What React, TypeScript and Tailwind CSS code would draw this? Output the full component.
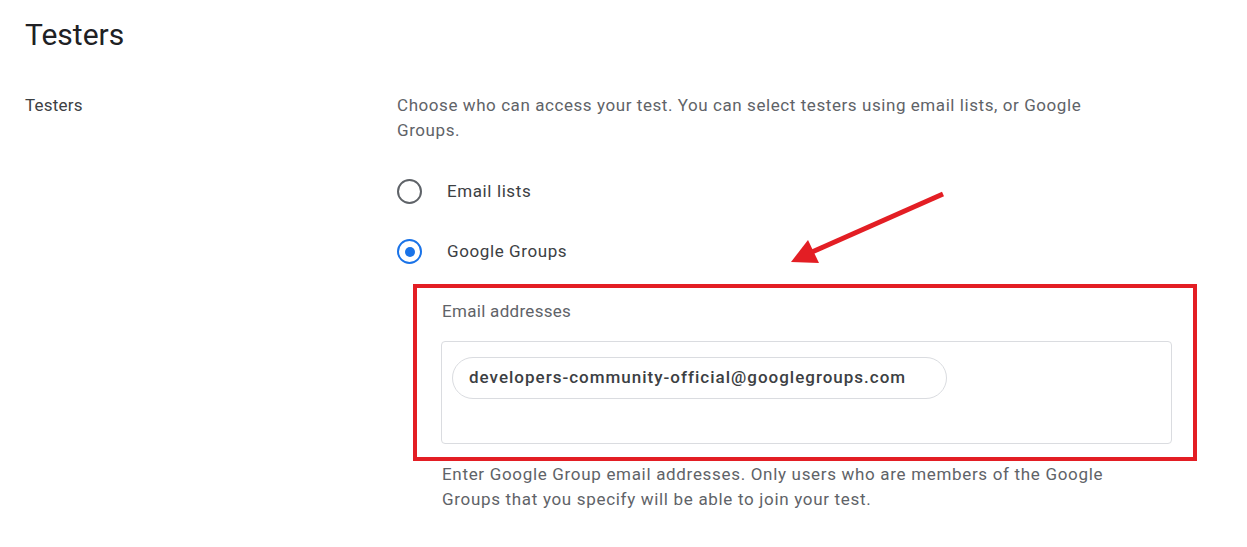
export default function App() {
  return (
    <div className="relative min-h-screen bg-white pl-[25px] pt-[17px] font-['Roboto',sans-serif] text-[#3c4043]">
      <h1 className="text-[30px] leading-[36px] font-normal text-[#202124]">Testers</h1>

      <div className="mt-[40px] flex">
        <div className="w-[372px] text-[17px] leading-[25px] tracking-[0.2px] text-[#3c4043]">Testers</div>

        <div className="flex-1">
          <p className="w-[710px] text-[17px] leading-[25px] tracking-[0.57px] text-[#5f6368]">
            Choose who can access your test. You can select testers using email lists, or Google Groups.
          </p>

          <div className="mt-[36px] flex flex-col gap-[35px]">
            <Radio label="Email lists" />
            <Radio label="Google Groups" checked />
          </div>

          <div className="relative ml-[44px] mt-[35px] w-[731px]">
            <div className="pl-[1px] text-[17px] leading-[24px] tracking-[0.3px] text-[#5f6368]">Email addresses</div>
            <div className="mt-[18px] h-[103px] rounded-[4px] border border-[#dadce0] px-[10px] pt-[15px]">
              <span className="inline-flex h-[42px] items-center rounded-full border border-[#dadce0] pl-[16px] pr-[40px] text-[17px] font-medium tracking-[1px] text-[#3c4043]">
                developers-community-official@googlegroups.com
              </span>
            </div>
            <p className="mt-[18px] w-[680px] pl-[1px] text-[17px] leading-[25px] tracking-[0.68px] text-[#5f6368]">
              Enter Google Group email addresses. Only users who are members of the Google Groups that you specify will be able to join your test.
            </p>

            {/* annotation box */}
            <div className="pointer-events-none absolute left-[-28px] top-[-15px] h-[177px] w-[784px] border-[4px] border-[#e31e24]" />
          </div>
        </div>
      </div>

      {/* annotation arrow */}
      <svg className="pointer-events-none absolute left-0 top-0" width="1247" height="547" viewBox="0 0 1247 547">
        <line x1="943" y1="194" x2="812" y2="252" stroke="#e31e24" strokeWidth="5" />
        <polygon points="791,262 808,240 819,263" fill="#e31e24" />
      </svg>
    </div>
  );
}

function Radio({ label, checked }: { label: string; checked?: boolean }) {
  return (
    <div className="flex h-[25px] items-center">
      <span
        className={`flex h-[25px] w-[25px] items-center justify-center rounded-full border-[2.5px] ${
          checked ? 'border-[#1a73e8]' : 'border-[#5f6368]'
        }`}
      >
        {checked && <span className="h-[10px] w-[10px] rounded-full bg-[#1a73e8]" />}
      </span>
      <span className="ml-[25px] text-[17px] tracking-[0.6px] text-[#3c4043]">{label}</span>
    </div>
  );
}
